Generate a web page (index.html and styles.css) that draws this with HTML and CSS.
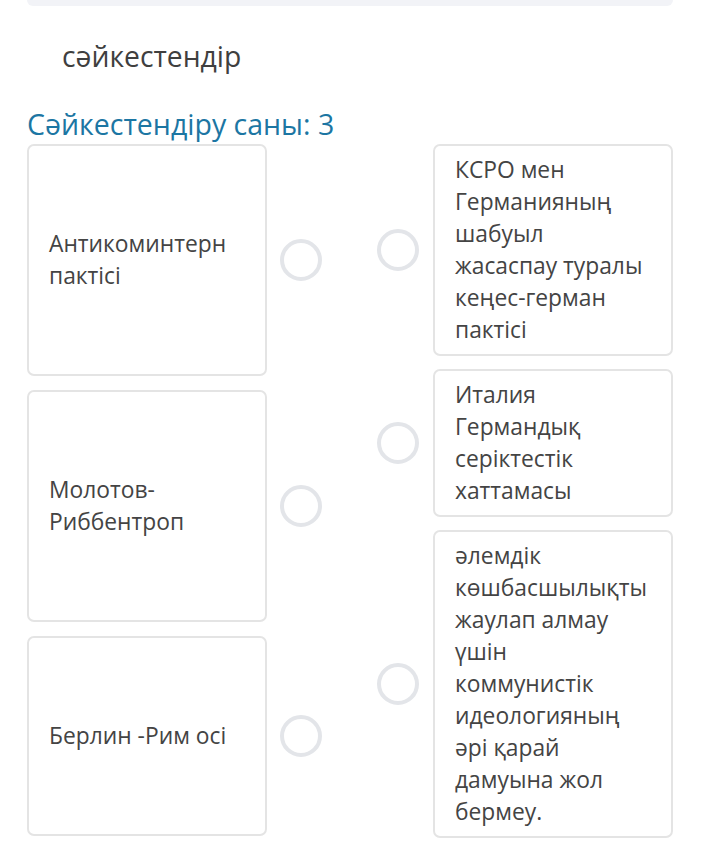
FILE: index.html
```html
<!DOCTYPE html>
<html lang="kk">
<head>
<meta charset="utf-8">
<link rel="stylesheet" href="styles.css">
</head>
<body>
<div class="page">
  <div class="topbar"></div>
  <div class="question">сәйкестендір</div>
  <div class="count">Сәйкестендіру саны: 3</div>
  <div class="match">
    <div class="col col-left">
      <div class="row row-a">
        <div class="card card-left">Антикоминтерн пактісі</div>
        <div class="dot"></div>
      </div>
      <div class="row row-b">
        <div class="card card-left">Молотов-Риббентроп</div>
        <div class="dot"></div>
      </div>
      <div class="row row-c">
        <div class="card card-left">Берлин -Рим осі</div>
        <div class="dot"></div>
      </div>
    </div>
    <div class="col col-right">
      <div class="row">
        <div class="dot"></div>
        <div class="card card-right">КСРО мен Германияның шабуыл жасаспау туралы кеңес-герман пактісі</div>
      </div>
      <div class="row">
        <div class="dot"></div>
        <div class="card card-right">Италия Германдық серіктестік хаттамасы</div>
      </div>
      <div class="row">
        <div class="dot"></div>
        <div class="card card-right">әлемдік көшбасшылықты жаулап алмау үшін коммунистік идеологияның әрі қарай дамуына жол бермеу.</div>
      </div>
    </div>
  </div>
</div>
</body>
</html>
```
FILE: styles.css
```css
html, body {
  margin: 0;
  padding: 0;
  background: #ffffff;
}
.page {
  width: 646px;
  margin-left: 27px;
  font-family: "Open Sans", "Noto Sans", sans-serif;
  color: #444444;
}
.topbar {
  height: 6px;
  background: #f2f3f7;
  border-radius: 0 0 8px 8px;
}
.question {
  font-size: 28.3px;
  line-height: 40px;
  margin-top: 30px;
  padding-left: 35px;
  color: #3f3f3f;
}
.count {
  font-size: 28.5px;
  line-height: 36px;
  margin-top: 30px;
  color: #1c76a3;
}
.match {
  display: flex;
  justify-content: space-between;
  margin-top: 2px;
}
.col {
  display: flex;
  flex-direction: column;
}
.col-left {
  gap: 14px;
}
.col-right {
  gap: 13px;
}
.row {
  display: flex;
  align-items: center;
  gap: 13px;
}
.col-right .row {
  gap: 14px;
}
.card {
  box-sizing: border-box;
  width: 240px;
  border: 2px solid #e4e4e4;
  border-radius: 7px;
  background: #ffffff;
  font-size: 22.8px;
  line-height: 32px;
}
.card-left {
  display: flex;
  align-items: center;
  padding: 8px 20px;
}
.row-a .card-left, .row-b .card-left {
  height: 232px;
}
.row-c .card-left {
  height: 200px;
}
.card-right {
  padding: 8px 20px;
}
.dot {
  box-sizing: border-box;
  width: 42px;
  height: 42px;
  border: 4px solid #e3e5e9;
  border-radius: 50%;
  flex-shrink: 0;
}
```
